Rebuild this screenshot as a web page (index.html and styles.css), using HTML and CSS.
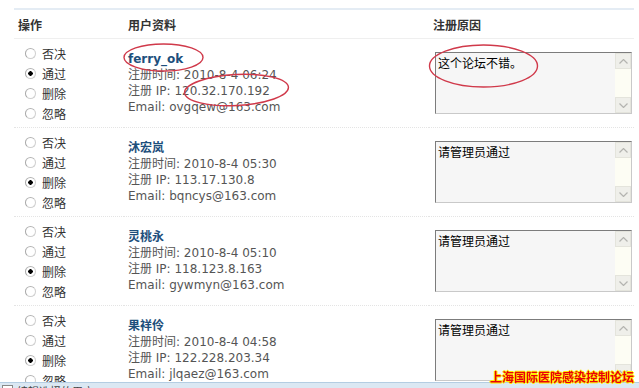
FILE: index.html
```html
<!DOCTYPE html>
<html lang="zh-CN">
<head>
    <meta charset="UTF-8">
    <meta name="viewport" content="width=device-width, initial-scale=1.0">
    <title>审核新用户</title>
    <link rel="stylesheet" href="styles.css">
</head>
<body>
    <table class="reg-table">
        <thead>
            <tr>
                <th class="col-op">操作</th>
                <th class="col-user">用户资料</th>
                <th class="col-reason">注册原因</th>
            </tr>
        </thead>
        <tbody>
            <tr>
                <td class="ops">
                    <label class="opt"><input type="radio" name="mod1">否决</label>
                    <label class="opt"><input type="radio" name="mod1" checked>通过</label>
                    <label class="opt"><input type="radio" name="mod1">删除</label>
                    <label class="opt"><input type="radio" name="mod1">忽略</label>
                </td>
                <td class="user">
                    <div class="uname">ferry_ok</div>
                    <div>注册时间: 2010-8-4 06:24</div>
                    <div>注册 IP: 120.32.170.192</div>
                    <div>Email: ovgqew@163.com</div>
                </td>
                <td class="reason">
                    <div class="reason-box">
                        <div class="reason-text">这个论坛不错。</div>
                        <div class="sbar">
                            <span class="sbtn"><svg width="9" height="5" viewBox="0 0 9 5"><polyline points="0.5,4.5 4.5,0.5 8.5,4.5" /></svg></span>
                            <span class="sbtn"><svg width="9" height="5" viewBox="0 0 9 5"><polyline points="0.5,0.5 4.5,4.5 8.5,0.5" /></svg></span>
                        </div>
                    </div>
                </td>
            </tr>
            <tr>
                <td class="ops">
                    <label class="opt"><input type="radio" name="mod2">否决</label>
                    <label class="opt"><input type="radio" name="mod2">通过</label>
                    <label class="opt"><input type="radio" name="mod2" checked>删除</label>
                    <label class="opt"><input type="radio" name="mod2">忽略</label>
                </td>
                <td class="user">
                    <div class="uname">沐宏岚</div>
                    <div>注册时间: 2010-8-4 05:30</div>
                    <div>注册 IP: 113.17.130.8</div>
                    <div>Email: bqncys@163.com</div>
                </td>
                <td class="reason">
                    <div class="reason-box">
                        <div class="reason-text">请管理员通过</div>
                        <div class="sbar">
                            <span class="sbtn"><svg width="9" height="5" viewBox="0 0 9 5"><polyline points="0.5,4.5 4.5,0.5 8.5,4.5" /></svg></span>
                            <span class="sbtn"><svg width="9" height="5" viewBox="0 0 9 5"><polyline points="0.5,0.5 4.5,4.5 8.5,0.5" /></svg></span>
                        </div>
                    </div>
                </td>
            </tr>
            <tr>
                <td class="ops">
                    <label class="opt"><input type="radio" name="mod3">否决</label>
                    <label class="opt"><input type="radio" name="mod3">通过</label>
                    <label class="opt"><input type="radio" name="mod3" checked>删除</label>
                    <label class="opt"><input type="radio" name="mod3">忽略</label>
                </td>
                <td class="user">
                    <div class="uname">灵桃永</div>
                    <div>注册时间: 2010-8-4 05:10</div>
                    <div>注册 IP: 118.123.8.163</div>
                    <div>Email: gywmyn@163.com</div>
                </td>
                <td class="reason">
                    <div class="reason-box">
                        <div class="reason-text">请管理员通过</div>
                        <div class="sbar">
                            <span class="sbtn"><svg width="9" height="5" viewBox="0 0 9 5"><polyline points="0.5,4.5 4.5,0.5 8.5,4.5" /></svg></span>
                            <span class="sbtn"><svg width="9" height="5" viewBox="0 0 9 5"><polyline points="0.5,0.5 4.5,4.5 8.5,0.5" /></svg></span>
                        </div>
                    </div>
                </td>
            </tr>
            <tr>
                <td class="ops">
                    <label class="opt"><input type="radio" name="mod4">否决</label>
                    <label class="opt"><input type="radio" name="mod4">通过</label>
                    <label class="opt"><input type="radio" name="mod4" checked>删除</label>
                    <label class="opt"><input type="radio" name="mod4">忽略</label>
                </td>
                <td class="user">
                    <div class="uname">果祥伶</div>
                    <div>注册时间: 2010-8-4 04:58</div>
                    <div>注册 IP: 122.228.203.34</div>
                    <div>Email: jlqaez@163.com</div>
                </td>
                <td class="reason">
                    <div class="reason-box">
                        <div class="reason-text">请管理员通过</div>
                        <div class="sbar">
                            <span class="sbtn"><svg width="9" height="5" viewBox="0 0 9 5"><polyline points="0.5,4.5 4.5,0.5 8.5,4.5" /></svg></span>
                            <span class="sbtn"><svg width="9" height="5" viewBox="0 0 9 5"><polyline points="0.5,0.5 4.5,4.5 8.5,0.5" /></svg></span>
                        </div>
                    </div>
                </td>
            </tr>
        </tbody>
    </table>

    <!-- red marks drawn over the screenshot -->
    <svg class="marks" width="639" height="388" viewBox="0 0 639 388">
        <ellipse cx="163.5" cy="57.5" rx="39.5" ry="13.5" />
        <ellipse cx="236.5" cy="90" rx="52" ry="15.5" transform="rotate(-3 236.5 90)" />
        <ellipse cx="483.5" cy="66" rx="54" ry="21" />
    </svg>

    <div class="bottom-bar"><span class="chk"></span><span class="bar-text">编辑选择的用户</span></div>
    <div class="watermark">上海国际医院感染控制论坛</div>
</body>
</html>
```

FILE: styles.css
```css
body {
    margin: 8px 5px 0 14px;
    font-family: "DejaVu Sans", "Noto Sans CJK SC", sans-serif;
    font-size: 12px;
    color: #333;
    background-color: #fff;
}

.reg-table {
    width: 620px;
    border-collapse: collapse;
    border-top: 2px solid #e4ecf4;
}

.reg-table th {
    height: 28px;
    padding: 0 4px;
    text-align: left;
    font-family: "Noto Sans CJK SC", sans-serif;
    font-weight: bold;
    color: #333;
    border-bottom: 1px solid #efefef;
}

.col-op {
    width: 102px;
}

.col-user {
    width: 297px;
}

.reg-table td {
    padding: 4px 0;
    vertical-align: middle;
    border-bottom: 1px dotted #e4e4e4;
}

.ops {
    padding-left: 11px !important;
}

.opt {
    display: flex;
    align-items: center;
    height: 20px;
    font-family: "Noto Sans CJK SC", sans-serif;
    color: #333;
}

.opt input {
    appearance: none;
    width: 11px;
    height: 11px;
    margin: 0 6px 0 0;
    border: 1px solid #cfcfcf;
    border-left-color: #a8a8a8;
    border-top-color: #b4b4b4;
    border-radius: 50%;
    background-color: #fff;
}

.opt input:checked {
    background: radial-gradient(circle, #000 0 2px, #fff 2.5px);
}

.user {
    padding-left: 4px !important;
    line-height: 16px;
    color: #555;
}

.uname {
    font-weight: bold;
    color: #1d4f7c;
}

.reason {
    padding-left: 6px !important;
}

.reason-box {
    display: flex;
    width: 197px;
    height: 62px;
    box-sizing: border-box;
    border: 1px solid #c9c9c9;
    border-top-color: #7c7c7c;
    border-left-color: #7c7c7c;
    background-color: #f6f6f6;
}

.reason-text {
    flex: 1;
    padding: 2px 2px;
    font-family: "Noto Sans CJK SC", sans-serif;
    line-height: 16px;
    color: #000;
}

.sbar {
    display: flex;
    flex-direction: column;
    justify-content: space-between;
    width: 16px;
    background-color: #fdfdf4;
}

.sbtn {
    display: flex;
    align-items: center;
    justify-content: center;
    height: 16px;
    box-sizing: border-box;
    border: 1px solid #e4e4dc;
    background-color: #efefea;
}

.sbtn svg polyline {
    fill: none;
    stroke: #b4b4b0;
    stroke-width: 1.2;
}

.marks {
    position: absolute;
    top: 0;
    left: 0;
    pointer-events: none;
}

.marks ellipse {
    fill: none;
    stroke: #d0394a;
    stroke-width: 1.4;
}

.bottom-bar {
    position: fixed;
    left: 0;
    right: 0;
    bottom: 0;
    height: 5px;
    padding-left: 2px;
    overflow: hidden;
    background-color: #dbe8f3;
    border-top: 1px solid #b4cde2;
    font-family: "Noto Sans CJK SC", sans-serif;
    font-size: 11px;
    line-height: 14px;
    color: #444;
}

.chk {
    display: inline-block;
    width: 9px;
    height: 9px;
    margin: 2px 4px 0 0;
    border: 1px solid #888;
    background-color: #fff;
    vertical-align: top;
}

.bar-text {
    display: inline-block;
    vertical-align: top;
    margin-top: 1px;
}

.watermark {
    position: fixed;
    right: 5px;
    bottom: 4px;
    font-family: "Noto Sans CJK SC", sans-serif;
    font-size: 12px;
    font-weight: bold;
    line-height: 15px;
    color: #e8000b;
    text-shadow: 1px 0 #ffee00, -1px 0 #ffee00, 0 1px #ffee00, 0 -1px #ffee00;
}
```
